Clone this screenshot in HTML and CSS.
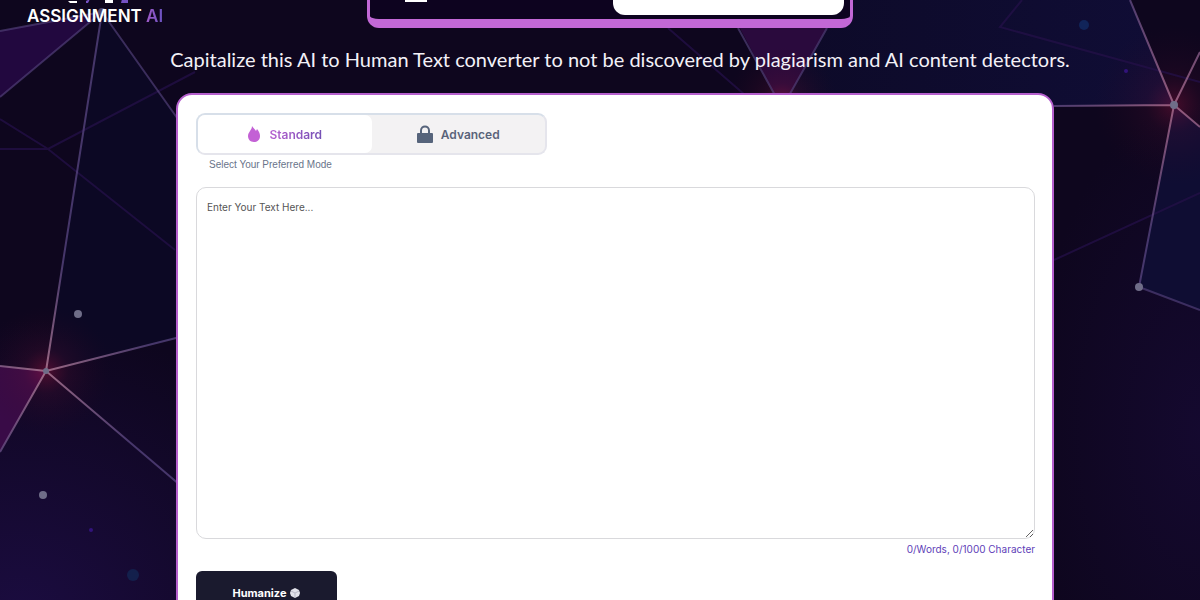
FILE: index.html
```html
<!DOCTYPE html>
<html lang="en">
<head>
    <meta charset="UTF-8">
    <meta name="viewport" content="width=device-width, initial-scale=1.0">
    <title>AI to Human Text Converter</title>
    <link rel="stylesheet" href="styles.css">
</head>
<body>
    <div class="page">
        <!-- background network -->
        <svg class="bg" viewBox="0 0 1200 600" preserveAspectRatio="none" aria-hidden="true">
            <defs>
                <radialGradient id="glow">
                    <stop offset="0" stop-color="#a0163f" stop-opacity="0.75"/>
                    <stop offset="0.35" stop-color="#5c1030" stop-opacity="0.35"/>
                    <stop offset="1" stop-color="#30061f" stop-opacity="0"/>
                </radialGradient>
                <radialGradient id="corner">
                    <stop offset="0" stop-color="#1b0c40"/>
                    <stop offset="1" stop-color="#1b0c40" stop-opacity="0"/>
                </radialGradient>
                <linearGradient id="blue" x1="0" y1="0" x2="1" y2="0">
                    <stop offset="0" stop-color="#0d0a28"/>
                    <stop offset="1" stop-color="#100d36"/>
                </linearGradient>
                <!-- lines turn pink near the nodes -->
                <radialGradient id="lineLeft" gradientUnits="userSpaceOnUse" cx="46" cy="371" r="110">
                    <stop offset="0" stop-color="#b37f99"/>
                    <stop offset="1" stop-color="#54427c"/>
                </radialGradient>
                <radialGradient id="lineRight" gradientUnits="userSpaceOnUse" cx="1174" cy="105" r="130">
                    <stop offset="0" stop-color="#ae6f90"/>
                    <stop offset="1" stop-color="#54427c"/>
                </radialGradient>
            </defs>
            <ellipse cx="20" cy="620" rx="330" ry="300" fill="url(#corner)"/>
            <ellipse cx="1200" cy="430" rx="170" ry="330" fill="url(#corner)" opacity="0.5"/>
            <polygon points="102,12 0,31 0,97" fill="#22083f"/>
            <polygon points="102,12 180,122 180,337 46,371" fill="#0c0a28" opacity="0.6"/>
            <polygon points="46,371 0,366 0,452" fill="#390b47"/>
            <polygon points="843,0 1130,0 1174,105 782,108" fill="url(#blue)"/>
            <polygon points="725,0 842,0 782,108" fill="#2a0a3d"/>
            <polygon points="1174,105 1200,127 1200,310 1139,287" fill="#0f0d33"/>
            <circle cx="46" cy="371" r="65" fill="url(#glow)" opacity="0.6"/>
            <circle cx="1174" cy="105" r="80" fill="url(#glow)" opacity="0.5"/>
            <circle cx="782" cy="102" r="55" fill="url(#glow)" opacity="0.7"/>
            <g stroke="#241048" stroke-width="2" fill="none" opacity="0.75">
                <path d="M0 119L48 149L175 250M0 149H48L195 72"/>
                <path d="M668 28L745 95M1022 0L1000 27L1200 82M1054 260L1200 193"/>
            </g>
            <g stroke="#54427c" stroke-width="2" fill="none" opacity="0.65">
                <path d="M0 31L102 12L0 97M102 12L180 122"/>
                <path d="M738 28L782 108L827 28M1139 287L1200 310"/>
            </g>
            <path d="M0 366L46 371L180 337M0 452L46 371L180 485M102 12L46 371" stroke="url(#lineLeft)" stroke-width="2" fill="none" opacity="0.8"/>
            <path d="M1130 0L1174 105L1200 52M1200 127L1174 105M1054 106L1174 105L1139 287" stroke="url(#lineRight)" stroke-width="2" fill="none" opacity="0.8"/>
            <g fill="#6f6d88">
                <circle cx="102" cy="12" r="4" fill="#4c466d"/>
                <circle cx="46" cy="371" r="3"/>
                <circle cx="78" cy="314" r="4"/>
                <circle cx="43" cy="495" r="4"/>
                <circle cx="1174" cy="105" r="4"/>
                <circle cx="1139" cy="287" r="4"/>
            </g>
            <circle cx="133" cy="575" r="6" fill="#132653" opacity="0.8"/>
            <circle cx="91" cy="530" r="2" fill="#32137b"/>
            <circle cx="1084" cy="25" r="5" fill="#122a63" opacity="0.8"/>
            <circle cx="1126" cy="71" r="2" fill="#32137b"/>
        </svg>

        <header class="header">
            <a class="logo" href="#">
                <svg class="logo-mark" width="142" height="8" viewBox="0 0 142 8" aria-hidden="true">
                    <path d="M41 6H50V8H43ZM78 5H86V8H78Z" fill="#fff"/>
                    <path d="M59 6L63 4L61 8H59ZM95 4H101V8H94Z" fill="#7652c4"/>
                </svg>
                <span class="logo-text">ASSIGNMENT <span class="logo-ai">AI</span></span>
            </a>
            <nav class="nav">
                <button class="menu-btn" type="button" aria-label="Menu"></button>
                <button class="nav-btn" type="button" aria-label="Sign up"></button>
            </nav>
        </header>

        <main class="main">
            <p class="tagline">Capitalize this AI to Human Text converter to not be discovered by plagiarism and AI content detectors.</p>
            <form class="card">
                <div class="tabs">
                    <button class="tab active" type="button">
                        <svg width="14" height="18" viewBox="0 0 14 18" aria-hidden="true">
                            <path d="M5 1C6 3 8 4 9 6L10 4C12 6 13 9 13 11C13 15 10 17 7 17C3 17 1 14 1 11C1 7 5 5 5 1Z" fill="#c361d5"/>
                        </svg>
                        <span class="tab-text">Standard</span>
                    </button>
                    <button class="tab" type="button">
                        <svg width="16" height="18" viewBox="0 0 16 18" aria-hidden="true">
                            <path d="M4 9V5.5C4 0 12 0 12 5.5V9" fill="none" stroke="#56647b" stroke-width="2"/>
                            <rect x="0" y="8" width="16" height="10" rx="1" fill="#56647b"/>
                        </svg>
                        <span class="tab-text">Advanced</span>
                    </button>
                </div>
                <p class="hint">Select Your Preferred Mode</p>
                <textarea class="text-input" aria-label="Text" placeholder="Enter Your Text Here..."></textarea>
                <p class="counter">0/Words, 0/1000 Character</p>
                <button class="submit-btn" type="button">
                    Humanize
                    <svg width="10" height="10" viewBox="0 0 10 10" aria-hidden="true">
                        <path d="M5 0L9 2L10 5L9 8L5 10L1 8L0 5L1 2Z" fill="#e2e2ea"/>
                        <path d="M1 3L5 5L9 3M5 5V9" fill="none" stroke="#b9b9c8"/>
                    </svg>
                </button>
            </form>
        </main>
    </div>
</body>
</html>
```
FILE: styles.css
```css
* {
    box-sizing: border-box;
}
body {
    margin: 0;
    background: #0e061e;
    font-family: Inter, "Liberation Sans", sans-serif;
}
button, textarea {
    font-family: inherit;
}
.page {
    position: relative;
    height: 100vh;
    overflow: hidden;
}
.bg {
    position: absolute;
    top: 0;
    left: 0;
    width: 100%;
    height: 100%;
    z-index: -1;
}

/* header */
.header {
    display: grid;
    grid-template-columns: 1fr 486px 1fr;
    height: 28px;
    padding-left: 20px;
}
.logo {
    padding-left: 7px;
    text-decoration: none;
    color: #fff;
}
.logo-mark {
    display: block;
    margin-top: -5px;
}
.logo-text {
    display: block;
    margin-top: 4px;
    font-size: 17px;
    line-height: 18px;
    font-weight: 600;
    white-space: nowrap;
}
.logo-ai {
    background: linear-gradient(90deg, #a25bc9, #6951c0);
    background-clip: text;
    -webkit-background-clip: text;
    color: transparent;
}
.nav {
    display: flex;
    justify-content: space-between;
    align-items: flex-start;
    border: solid #c268d6;
    border-width: 0 3px 9px;
    border-radius: 0 0 12px 12px;
    background: #0d031f;
    padding: 0 6px 0 35px;
}
.menu-btn {
    width: 22px;
    height: 2px;
    padding: 0;
    border: none;
    background: #fff;
}
.nav-btn {
    width: 231px;
    height: 15px;
    padding: 0;
    border: none;
    border-radius: 0 0 12px 12px;
    background: #fff;
}

/* converter */
.main {
    margin: 0 146px 0 176px;
}
.tagline {
    margin: 0 -20px 0 -10px;
    padding: 17px 0 20px;
    color: #f3f1f7;
    font-family: Lato, "Liberation Sans", sans-serif;
    font-size: 20px;
    line-height: 28px;
    text-align: center;
    white-space: nowrap;
}
.card {
    display: flex;
    flex-direction: column;
    align-items: flex-start;
    padding: 18px 17px 60px 18px;
    border: 2px solid #b55fcd;
    border-radius: 16px;
    background: #fff;
}
.tabs {
    display: grid;
    grid-template-columns: 1fr 1fr;
    width: 351px;
    height: 42px;
    border: 2px solid #e5e5ec;
    border-top-color: #d7dfe9;
    border-left-color: #d7dfe9;
    border-radius: 9px;
    background: #f3f2f3;
}
.tab {
    display: flex;
    align-items: center;
    justify-content: center;
    gap: 8px;
    padding: 0;
    border: none;
    border-radius: 7px;
    background: none;
    color: #59647a;
    font-size: 12px;
    font-weight: 600;
    cursor: pointer;
}
.tab.active {
    background: #fff;
}
.tab.active .tab-text {
    background: linear-gradient(90deg, #b660d0, #7450b5);
    background-clip: text;
    -webkit-background-clip: text;
    color: transparent;
}
.hint {
    margin: 2px 0 14px 13px;
    color: #69748a;
    font-family: "Liberation Sans", Arial, sans-serif;
    font-size: 10px;
    line-height: 16px;
}
.text-input {
    width: 100%;
    height: 352px;
    padding: 11px 10px;
    border: 1px solid #d9d9dc;
    border-radius: 10px;
    outline: none;
    resize: vertical;
    background: #fff;
    color: #333;
    font-size: 10px;
    line-height: 16px;
}
.text-input::placeholder {
    color: #555;
}
.counter {
    margin: 2px 0 14px;
    align-self: flex-end;
    color: #6041b8;
    font-size: 10px;
    line-height: 16px;
}
.submit-btn {
    display: flex;
    align-items: center;
    justify-content: center;
    gap: 4px;
    width: 141px;
    height: 43px;
    border: none;
    border-radius: 6px;
    background: #1a1a2e;
    color: #fff;
    font-size: 11px;
    font-weight: 700;
    cursor: pointer;
}
```
